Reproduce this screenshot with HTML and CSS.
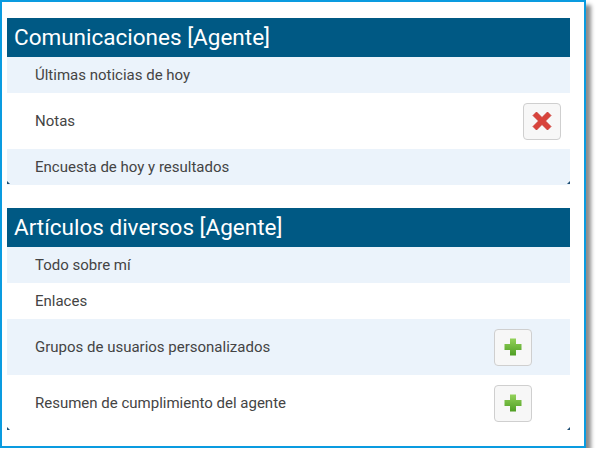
FILE: index.html
```html
<!DOCTYPE html>
<html>
<head>
<meta charset="utf-8">
<link rel="stylesheet" href="styles.css">
</head>
<body>
<div class="frame">
  <section class="panel">
    <div class="panel-head">Comunicaciones [Agente]</div>
    <div class="row alt">Últimas noticias de hoy</div>
    <div class="row tall">Notas
      <button class="btn" type="button" aria-label="Eliminar">
        <svg width="20" height="20" viewBox="0 0 20 20"><path d="M1 4.5 L4.5 1 L10 6.5 L15.5 1 L19 4.5 L13.5 10 L19 15.5 L15.5 19 L10 13.5 L4.5 19 L1 15.5 L6.5 10 Z" fill="#d8433b" stroke="#c8352f" stroke-width="0.8" stroke-linejoin="round"/></svg>
      </button>
    </div>
    <div class="row alt">Encuesta de hoy y resultados</div>
  </section>
  <section class="panel second">
    <div class="panel-head">Artículos diversos [Agente]</div>
    <div class="row alt">Todo sobre mí</div>
    <div class="row">Enlaces</div>
    <div class="row alt tall">Grupos de usuarios personalizados
      <button class="btn" type="button" aria-label="Agregar">
        <svg width="18" height="18" viewBox="0 0 18 18"><defs><linearGradient id="g1" x1="0" y1="0" x2="0" y2="1"><stop offset="0" stop-color="#94d25a"/><stop offset="1" stop-color="#4f9e24"/></linearGradient></defs><path d="M6 0.5 H12 V6 H17.5 V12 H12 V17.5 H6 V12 H0.5 V6 H6 Z" fill="url(#g1)"/></svg>
      </button>
    </div>
    <div class="row tall">Resumen de cumplimiento del agente
      <button class="btn" type="button" aria-label="Agregar">
        <svg width="18" height="18" viewBox="0 0 18 18"><defs><linearGradient id="g2" x1="0" y1="0" x2="0" y2="1"><stop offset="0" stop-color="#94d25a"/><stop offset="1" stop-color="#4f9e24"/></linearGradient></defs><path d="M6 0.5 H12 V6 H17.5 V12 H12 V17.5 H6 V12 H0.5 V6 H6 Z" fill="url(#g2)"/></svg>
      </button>
    </div>
  </section>
</div>
</body>
</html>
```
FILE: styles.css
```css
html, body {
  margin: 0;
  padding: 0;
  background: #ffffff;
}
body {
  font-family: Roboto, "Liberation Sans", Arial, sans-serif;
}
.frame {
  width: 563px;
  padding: 16px 14px 15px 5px;
  border: 2px solid #0a9be0;
  background: #ffffff;
  box-shadow: 5px 5px 4px rgba(0, 0, 0, 0.45);
}
.panel {
  position: relative;
}
.panel::before,
.panel::after {
  content: "";
  position: absolute;
  bottom: 1px;
  width: 0;
  height: 0;
  border-style: solid;
}
.panel::before {
  left: 0;
  border-width: 3px 0 0 3px;
  border-color: transparent transparent transparent #1f4f75;
}
.panel::after {
  right: 0;
  border-width: 0 0 3px 3px;
  border-color: transparent transparent #1f4f75 transparent;
}
.second {
  margin-top: 23px;
}
.panel-head {
  height: 39px;
  line-height: 39px;
  background: #005984;
  color: #ffffff;
  font-size: 22.5px;
  padding-left: 7px;
}
.row {
  height: 36px;
  display: flex;
  align-items: center;
  justify-content: space-between;
  padding: 0 9px 0 28px;
  font-size: 15px;
  color: #444444;
  background: #ffffff;
}
.row.alt {
  background: #ebf3fb;
}
.row.tall {
  height: 56px;
}
.btn {
  width: 38px;
  height: 37px;
  box-sizing: border-box;
  border: 1px solid #cfcfcf;
  border-radius: 4px;
  background: #f7f7f7;
  display: flex;
  align-items: center;
  justify-content: center;
  padding: 0;
  margin: 0;
}
.btn svg {
  display: block;
}
.second .btn {
  margin-right: 29px;
}
```
